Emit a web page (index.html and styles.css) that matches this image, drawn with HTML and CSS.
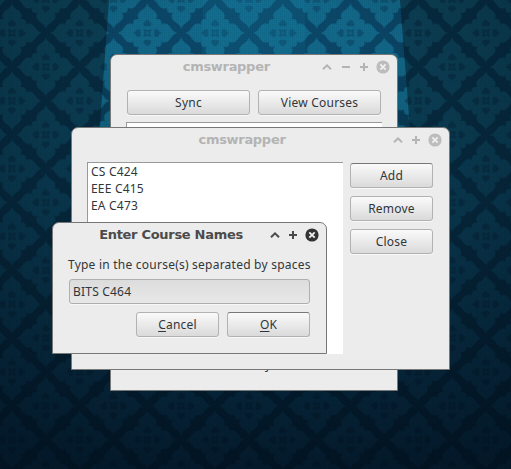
FILE: index.html
```html
<!DOCTYPE html>
<html lang="en">
<head>
<meta charset="utf-8">
<title>cmswrapper</title>
<link rel="stylesheet" href="styles.css">
</head>
<body>
<svg class="wallpaper" width="511" height="469" aria-hidden="true">
  <defs>
    <linearGradient id="base" x2="0" y2="1"><stop offset="0" stop-color="#062c42"/><stop offset=".45" stop-color="#052538"/><stop offset="1" stop-color="#021524"/></linearGradient>
    <linearGradient id="tint" x2="0" y2="1"><stop offset="0" stop-color="#0c4156"/><stop offset=".45" stop-color="#08344a"/><stop offset="1" stop-color="#041c2e"/></linearGradient>
    <radialGradient id="shade" gradientUnits="userSpaceOnUse" cx="255" cy="200" r="340"><stop offset=".6" stop-color="#000c18" stop-opacity="0"/><stop offset="1" stop-color="#000c18" stop-opacity=".25"/></radialGradient>
    <radialGradient id="glow" gradientUnits="userSpaceOnUse" cx="255" cy="0" r="230"><stop offset="0" stop-color="#116a9c" stop-opacity=".48"/><stop offset=".65" stop-color="#116a9c" stop-opacity=".4"/><stop offset="1" stop-color="#107099" stop-opacity=".1"/></radialGradient>
    <g id="motif">
      <g id="half">
        <path id="quarter" d="M0-30C1-24 9-23 9.5-18C10-15 8-13 6-12.5C10-15 14-14 14-11C15-10 14-8 12.5-6C13-8 15-10 18-9.5C23-9 24-1 30 0L0 0Z"/>
        <use href="#quarter" transform="scale(-1 1)"/>
      </g>
      <use href="#half" transform="scale(1 -1)"/>
    </g>
    <g id="leaf"><path d="M0-14C1-12 4-11 4-9C4-7 2-6 0-7C-2-6-4-7-4-9C-4-11-1-12 0-14Z"/></g>
    <g id="core">
      <use href="#leaf"/><use href="#leaf" transform="rotate(90)"/><use href="#leaf" transform="rotate(180)"/><use href="#leaf" transform="rotate(270)"/>
      <path d="M-4-4L0-3L4-4L3 0L4 4L0 3L-4 4L-3 0Z"/>
    </g>
    <g id="flower">
      <use href="#motif" fill="#fff"/>
      <use href="#core" fill="#555"/>
      <circle r="1.7" fill="#ccc"/>
    </g>
    <pattern id="flowers" width="67.7" height="67.8" patternUnits="userSpaceOnUse" x="12" y="33">
      <use href="#flower"/><use href="#flower" x="67.7"/><use href="#flower" y="67.8"/><use href="#flower" x="67.7" y="67.8"/><use href="#flower" x="33.85" y="33.9"/>
    </pattern>
    <mask id="print"><rect width="511" height="469" fill="url(#flowers)"/></mask>
    <pattern id="weave" width="2" height="2" patternUnits="userSpaceOnUse"><path d="M0 0h1v1H0z" fill="#00101c" fill-opacity=".08"/></pattern>
  </defs>
  <rect width="511" height="469" fill="url(#base)"/>
  <rect width="511" height="469" fill="url(#tint)" mask="url(#print)"/>
  <path d="M109 0H400L414 180H96Z" fill="url(#glow)"/>
  <path d="M109 0H400L414 180H96Z" fill="#1c9cbc" fill-opacity=".3" mask="url(#print)"/>
  <path d="M203 0H305L307 130H200Z" fill="#1785a8" fill-opacity=".14"/>
  <rect width="511" height="469" fill="url(#shade)"/>
  <rect width="511" height="469" fill="url(#weave)"/>
</svg>

<svg class="symbols" aria-hidden="true">
  <symbol id="up" viewBox="0 0 14 14"><path d="M3 9.3 7 5.3 11 9.3" fill="none" stroke="currentColor" stroke-width="2"/></symbol>
  <symbol id="minus" viewBox="0 0 14 14"><path d="M3 7h8" stroke="currentColor" stroke-width="2"/></symbol>
  <symbol id="plus" viewBox="0 0 14 14"><path d="M3 7h8M7 3v8" stroke="currentColor" stroke-width="2"/></symbol>
  <symbol id="close" viewBox="0 0 14 14"><circle cx="7" cy="7" r="6.6" fill="currentColor"/><path d="m4.3 4.3 5.4 5.4m0-5.4-5.4 5.4" stroke="#eee" stroke-width="1.9"/></symbol>
</svg>

<main class="desktop">
  <section class="window window-main">
    <header class="titlebar">
      <h1 class="title">cmswrapper</h1>
      <div class="controls"><svg><use href="#up"/></svg><svg><use href="#minus"/></svg><svg><use href="#plus"/></svg><svg class="x"><use href="#close"/></svg></div>
    </header>
    <div class="toolbar"><button class="btn">Sync</button><button class="btn">View Courses</button></div>
    <div class="list main-list"></div>
    <div class="status">y</div>
  </section>

  <section class="window window-courses">
    <header class="titlebar">
      <h1 class="title">cmswrapper</h1>
      <div class="controls"><svg><use href="#up"/></svg><svg><use href="#plus"/></svg><svg class="x"><use href="#close"/></svg></div>
    </header>
    <div class="courses">
      <ul class="list course-list"><li>CS C424</li><li>EEE C415</li><li>EA C473</li></ul>
      <div class="actions"><button class="btn focus">Add</button><button class="btn">Remove</button><button class="btn">Close</button></div>
    </div>
  </section>

  <section class="window window-dialog">
    <header class="titlebar">
      <h1 class="title">Enter Course Names</h1>
      <div class="controls"><svg><use href="#up"/></svg><svg><use href="#plus"/></svg><svg class="x"><use href="#close"/></svg></div>
    </header>
    <div class="form">
      <label class="prompt" for="names">Type in the course(s) separated by spaces</label>
      <input class="field" id="names" value="BITS C464">
      <div class="buttons"><button class="btn"><span class="key">C</span>ancel</button><button class="btn focus"><span class="key">O</span>K</button></div>
    </div>
  </section>
</main>
</body>
</html>
```
FILE: styles.css
```css
* { box-sizing: border-box; }
body {
  margin: 0;
  width: 511px;
  height: 469px;
  overflow: hidden;
  background: #052336;
  color: #31363a;
  font: 12px/17px "Noto Sans", sans-serif;
}
.wallpaper { position: absolute; inset: 0; }
.symbols { position: absolute; width: 0; height: 0; }
.desktop { position: relative; width: 511px; height: 469px; overflow: hidden; }

.window {
  position: absolute;
  background: #ececec;
  border: 1px solid #777;
  border-radius: 7px 7px 0 0;
}
.window-main { left: 110px; top: 54px; width: 288px; height: 337px; }
.window-courses { left: 71px; top: 127px; width: 379px; height: 243px; }
.window-dialog { left: 52px; top: 222px; width: 275px; height: 132px; }

.titlebar {
  display: flex;
  align-items: center;
  height: 24px;
  padding: 0 5px 0 23px;
  color: #b4b4b4;
}
.window-dialog .titlebar { color: #4b4b4b; }
.title {
  flex: 1;
  margin: 0;
  text-align: center;
  white-space: nowrap;
  font: bold 13px/24px "DejaVu Sans", sans-serif;
  letter-spacing: -.3px;
}
.controls { display: flex; gap: 4.5px; padding: 0 2.3px 0 1.7px; }
.controls svg { width: 14px; height: 14px; }
.x { color: #bcbcbc; }
.window-dialog .x { color: #333; }

.btn {
  height: 25px;
  padding: 0;
  border: 1px solid #b2b2b2;
  border-radius: 3px;
  background: linear-gradient(#fafafa, #dadada);
  box-shadow: 0 1px 0 #f8f8f8;
  color: inherit;
  font: inherit;
  line-height: 23px;
  letter-spacing: .22px;
}
.focus { border-top-color: #777; }
.key { text-decoration: underline; text-underline-offset: 2px; text-decoration-thickness: 1px; text-decoration-skip-ink: none; }

.toolbar { display: grid; grid-template-columns: 123px 123px; gap: 8px; padding: 11px 0 0 16px; }
.list { margin: 0; background: #fff; border: solid #999; border-width: 1px 0 0 1px; }
.main-list { width: 256px; height: 228px; margin: 7px 0 0 15px; }
.status { padding: 6px 0 0 154px; }

.courses { display: flex; gap: 7px; padding: 10px 0 0 15px; }
.course-list { width: 256px; height: 192px; padding: 0 0 0 3px; list-style: none; letter-spacing: .2px; }
.actions { display: grid; grid-template-columns: 83px; grid-auto-rows: 25px; gap: 8px; padding-top: 1px; }

.form { padding: 9px 16px 0; }
.prompt { display: block; height: 23px; margin-left: -1px; white-space: nowrap; letter-spacing: .23px; }
.field {
  display: block;
  width: 241px;
  height: 25px;
  padding: 0 3px;
  border: 1px solid #afafaf;
  border-radius: 3px;
  outline: 0;
  background: linear-gradient(#dcdcdc, #e8e8e8);
  box-shadow: 0 1px 0 #f8f8f8;
  color: inherit;
  font: inherit;
  letter-spacing: .2px;
}
.buttons { display: grid; grid-template-columns: 83px 83px; gap: 8px; justify-content: end; padding-top: 8px; }
```
